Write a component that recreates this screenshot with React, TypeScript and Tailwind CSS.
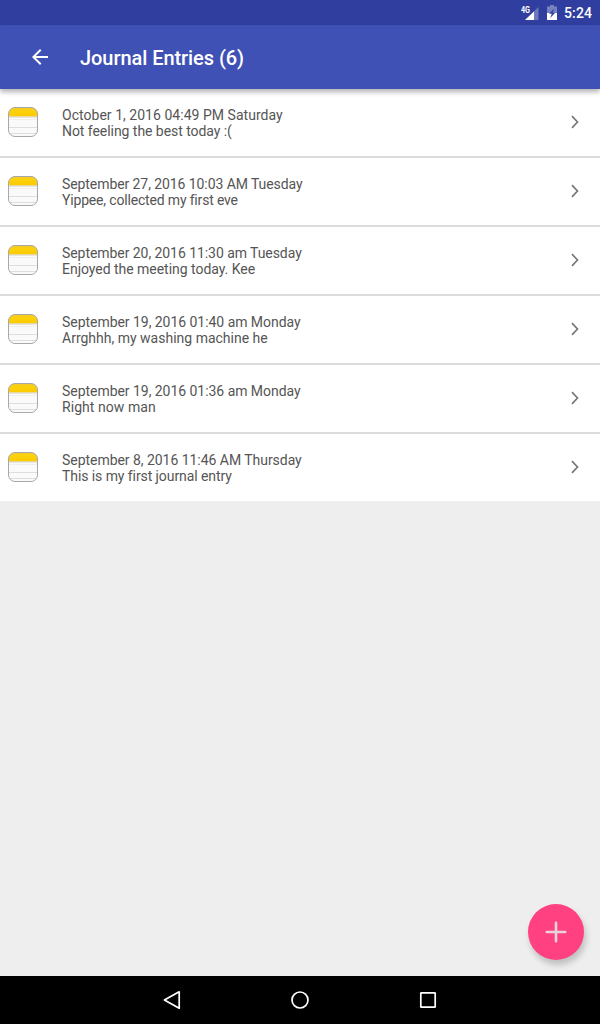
const entries = [
  {
    date: "October 1, 2016 04:49 PM Saturday",
    text: "Not feeling the best today :(",
    dateClass: "tracking-[0.03px]",
    textClass: "tracking-[-0.05px]",
  },
  {
    date: "September 27, 2016 10:03 AM Tuesday",
    text: "Yippee, collected my first eve",
    dateClass: "tracking-[-0.08px]",
    textClass: "tracking-[-0.17px]",
  },
  {
    date: "September 20, 2016 11:30 am Tuesday",
    text: "Enjoyed the meeting today. Kee",
    dateClass: "tracking-[-0.06px]",
    textClass: "tracking-[-0.03px]",
  },
  {
    date: "September 19, 2016 01:40 am Monday",
    text: "Arrghhh, my washing machine he",
    dateClass: "tracking-[-0.04px]",
    textClass: "",
  },
  {
    date: "September 19, 2016 01:36 am Monday",
    text: "Right now man",
    dateClass: "tracking-[-0.04px]",
    textClass: "tracking-[0.06px]",
  },
  {
    date: "September 8, 2016 11:46 AM Thursday",
    text: "This is my first journal entry",
    dateClass: "tracking-[-0.04px]",
    textClass: "tracking-[-0.08px]",
  },
];

function StatusBar() {
  return (
    <div className="flex h-[25px] shrink-0 items-center justify-end bg-[#303f9f] pr-2 text-white">
      <svg width="18" height="16" viewBox="0 0 18 16" className="mr-[8px]">
        <path d="M17.5 2v13H4z" fill="#fff" fillOpacity="0.3" />
        <path d="M13 6.5V15H4z" fill="#fff" />
        <path d="M0 0h9.5v8.5H0z" fill="#303f9f" />
        <text x="0" y="7.5" fontSize="8.5" fontWeight="700" fill="#fff" textLength="9" lengthAdjust="spacingAndGlyphs">
          4G
        </text>
      </svg>
      <svg width="10" height="16" viewBox="0 0 10 16" className="mr-[7px]">
        <path d="M3 0h4v1.5h3V8H0V1.5h3z" fill="#fff" fillOpacity="0.35" />
        <path d="M0 8h10v7H0z" fill="#fff" />
        <path d="M7.4 3.6 2 8.8h2.8L3.2 13 8.2 7.8H5.6z" fill="#303f9f" />
      </svg>
      <span className="pt-px text-[14px] leading-none font-medium tracking-[0.1px]">5:24</span>
    </div>
  );
}

function NoteIcon() {
  return (
    <svg width="30" height="30" viewBox="0 0 30 30" className="shrink-0">
      <defs>
        <linearGradient id="noteTop" x1="0" y1="0" x2="0" y2="1">
          <stop offset="0" stopColor="#f2c92a" />
          <stop offset="0.35" stopColor="#fcd20c" />
          <stop offset="1" stopColor="#fcca00" />
        </linearGradient>
      </defs>
      <rect x="0.5" y="0.5" width="29" height="29" rx="6.5" fill="#fafafa" />
      <path d="M.5 9.5V7A6.5 6.5 0 0 1 7 .5h16A6.5 6.5 0 0 1 29.5 7v2.5z" fill="url(#noteTop)" />
      <path d="M1 10h28" stroke="#d3cfc0" />
      <path d="M1 12.5h28" stroke="#eeeeee" />
      <path d="M1 20.5h28M1 26.5h28" stroke="#dedede" />
      <rect x="0.5" y="0.5" width="29" height="29" rx="6.5" fill="none" stroke="#a8a8a8" />
    </svg>
  );
}

export default function App() {
  return (
    <div className="relative flex h-[1024px] w-[600px] flex-col overflow-hidden bg-[#eeeeee] font-[Roboto,sans-serif]">
      <StatusBar />
      <header className="z-10 flex h-16 shrink-0 items-center bg-[#3f51b5] pl-7 text-white shadow-[0_3px_5px_rgba(0,0,0,0.3)]">
        <svg width="24" height="24" viewBox="0 0 24 24" fill="#fff">
          <path d="M20 11H7.83l5.59-5.59L12 4l-8 8 8 8 1.41-1.41L7.83 13H20v-2z" />
        </svg>
        <h1 className="ml-7 pt-[2px] text-[20px] font-medium tracking-[-0.06px]">Journal Entries (6)</h1>
      </header>

      <ul className="divide-y-2 divide-[#dcdcdc] bg-white text-[14px] leading-4 text-[#555555]">
        {entries.map((entry) => (
          <li key={entry.date} className="box-content flex h-[67px] items-start pr-[21px] pl-2">
            <div className="pt-[18px]">
              <NoteIcon />
            </div>
            <div className="ml-6 flex-1 pt-[18px]">
              <p className={entry.dateClass}>{entry.date}</p>
              <p className={entry.textClass}>{entry.text}</p>
            </div>
            <div className="pt-[26px]">
              <svg width="8" height="14" viewBox="0 0 8 14" fill="none" stroke="#777" strokeWidth="1.7">
                <path d="M1 1.2 6.5 7 1 12.8" />
              </svg>
            </div>
          </li>
        ))}
      </ul>

      <button className="absolute right-4 bottom-16 flex size-14 items-center justify-center rounded-full bg-[#ff4081] shadow-[2px_5px_6px_rgba(0,0,0,0.2)]">
        <svg width="22" height="22" viewBox="0 0 22 22" stroke="#e8d3da" strokeWidth="2.6" strokeLinecap="round">
          <path d="M11 1.8v18.4M1.8 11h18.4" />
        </svg>
      </button>

      <nav className="z-10 mt-auto flex h-12 shrink-0 items-center justify-center gap-[104px] bg-black">
        <svg width="24" height="24" viewBox="0 0 24 24" fill="none" stroke="#fff" strokeWidth="1.7" strokeLinejoin="round">
          <path d="M19.2 3.8v16.4L4.4 12z" />
        </svg>
        <svg width="24" height="24" viewBox="0 0 24 24" fill="none" stroke="#fff" strokeWidth="1.7">
          <circle cx="12" cy="12" r="8" />
        </svg>
        <svg width="24" height="24" viewBox="0 0 24 24" fill="none" stroke="#fff" strokeWidth="1.7">
          <rect x="4.8" y="4.8" width="14.4" height="14.4" rx="0.5" />
        </svg>
      </nav>
    </div>
  );
}
